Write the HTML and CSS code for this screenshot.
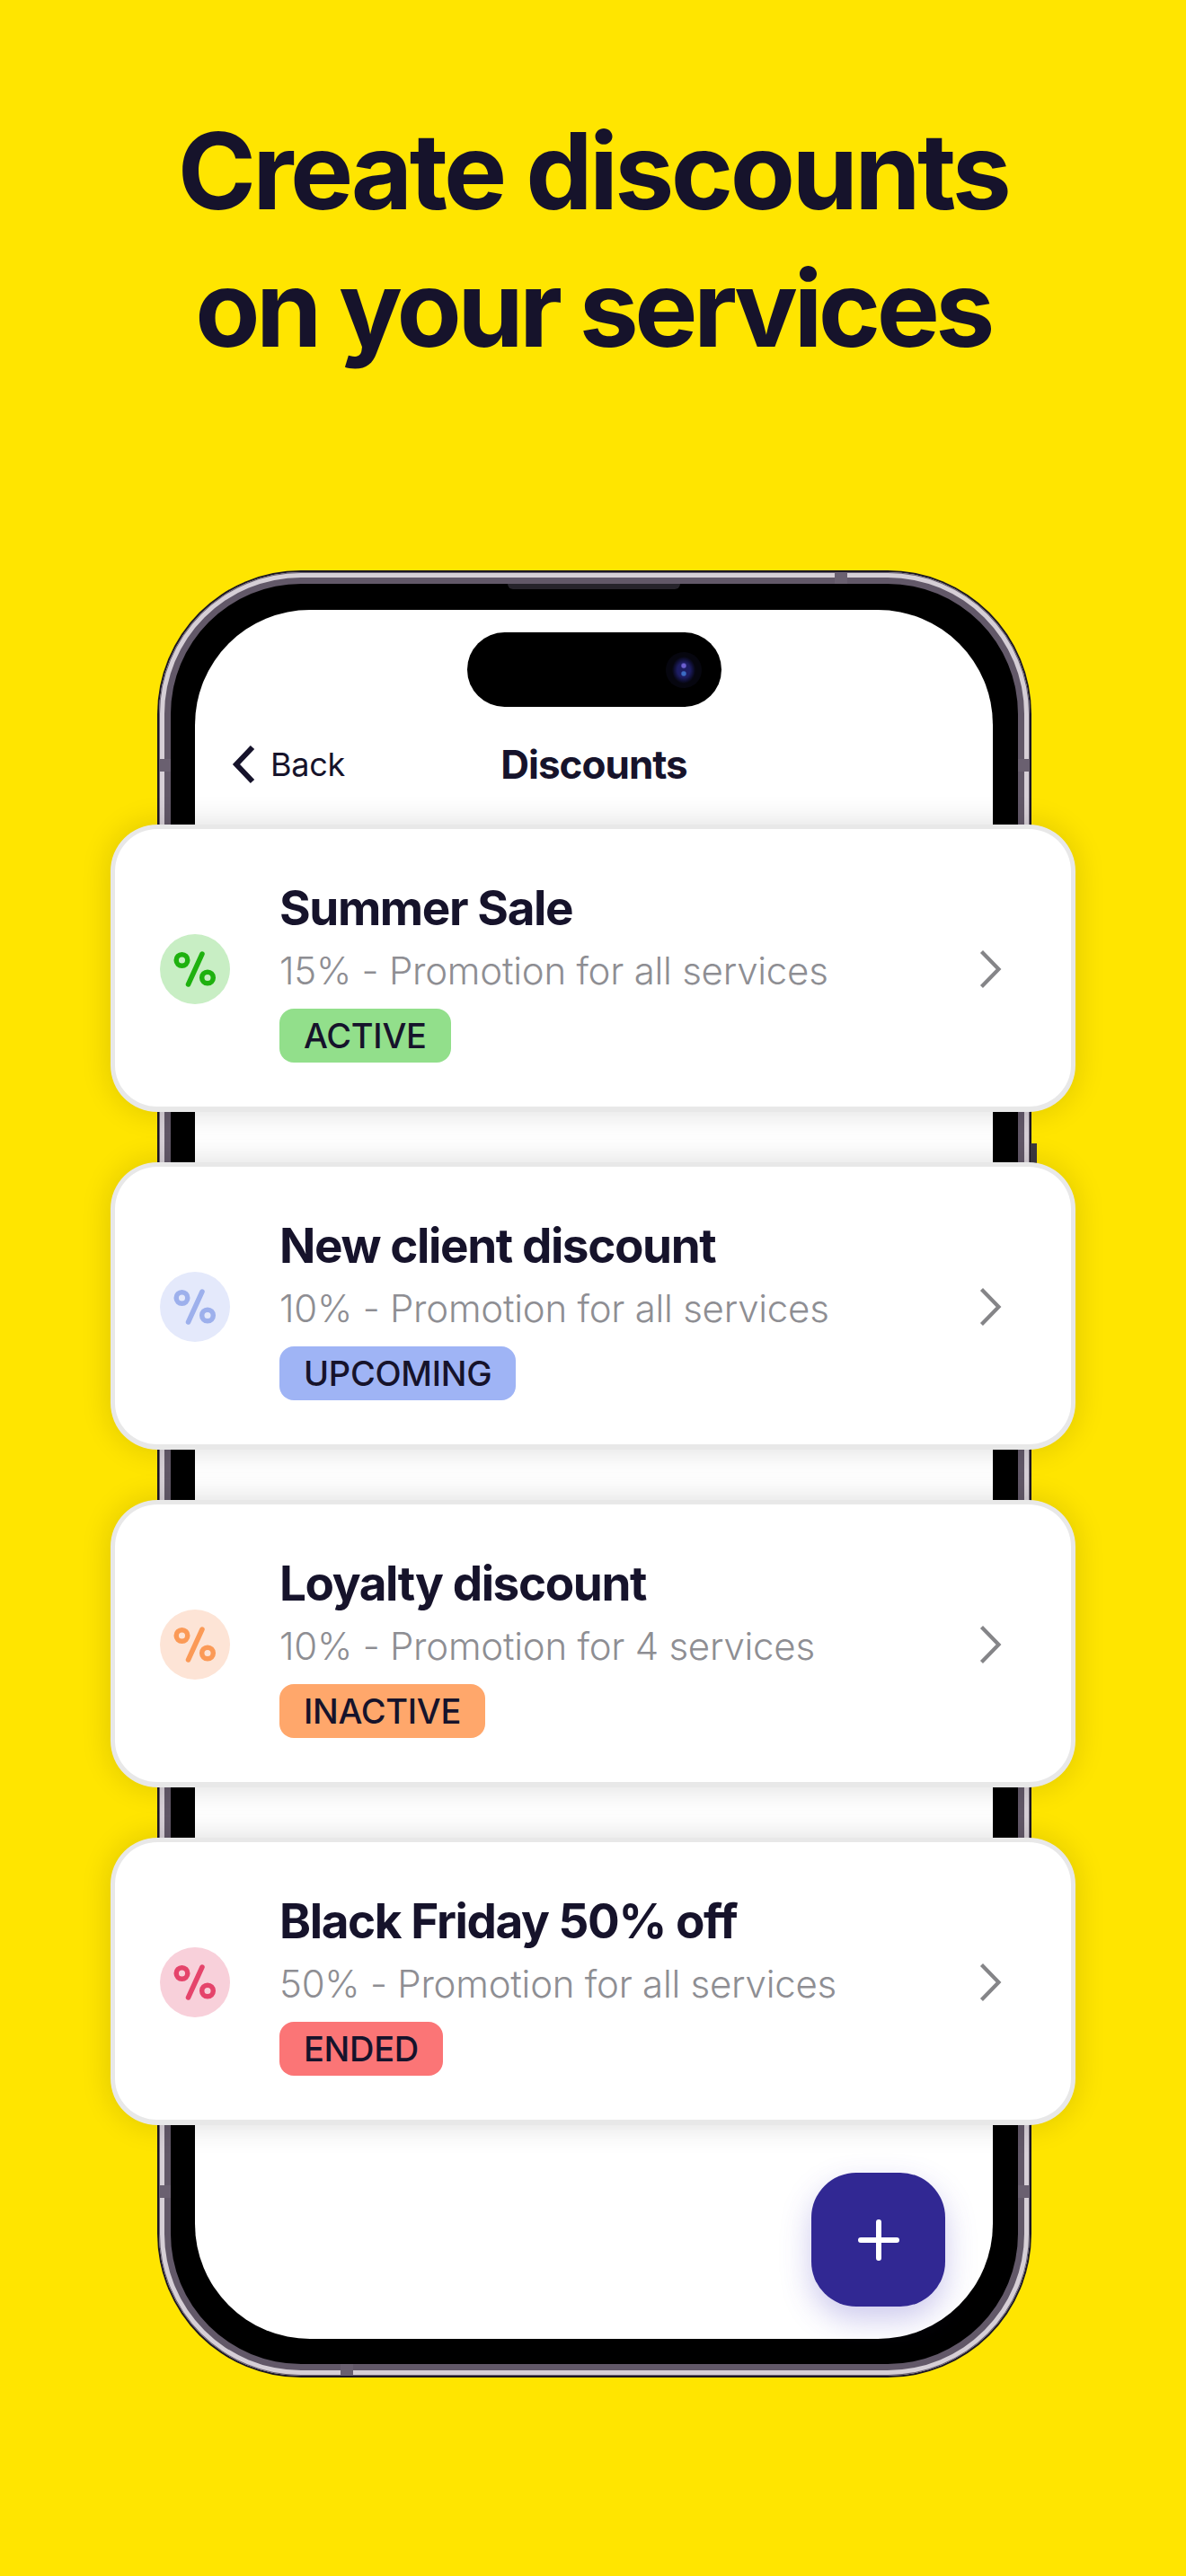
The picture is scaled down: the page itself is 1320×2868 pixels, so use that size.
FILE: index.html
```html
<!DOCTYPE html>
<html lang="en">
<head>
<meta charset="utf-8">
<title>Create discounts on your services</title>
<link rel="stylesheet" href="styles.css">
</head>
<body>
<main class="poster">
  <h1 class="headline">Create discounts<br><span class="line-two">on your services</span></h1>
  <div class="stage">
    <div class="phone">
      <span class="side-button"></span>
      <div class="bezel">
        <span class="notch notch-top"></span>
        <span class="notch notch-bottom"></span>
        <span class="notch notch-left-a"></span>
        <span class="notch notch-left-b"></span>
        <span class="notch notch-right-a"></span>
        <span class="notch notch-right-b"></span>
        <div class="speaker"></div>
        <div class="screen">
          <div class="island"><span class="camera"></span></div>
          <header class="nav">
            <div class="back">
              <svg class="back-icon" viewBox="0 0 28 44" aria-hidden="true"><path d="M24 3 6 22l18 19" fill="none" stroke="#16132b" stroke-width="6"/></svg>
              <span>Back</span>
            </div>
            <div class="nav-title">Discounts</div>
          </header>
          <div class="fab-row">
            <div class="fab">
              <svg class="plus" viewBox="0 0 46 46" aria-hidden="true"><path d="M23 3v40M3 23h40" fill="none" stroke="#fff" stroke-width="6" stroke-linecap="round"/></svg>
            </div>
          </div>
        </div>
      </div>
    </div>
    <div class="cards">
      <article class="card">
        <div class="pct pct-green"><svg viewBox="0 0 48 40" aria-hidden="true"><circle cx="9.5" cy="10" r="6.3"/><circle cx="38" cy="29.5" r="6.3"/><path d="M32 3 16.5 37"/></svg></div>
        <div class="body">
          <h2 class="title">Summer Sale</h2>
          <p class="sub">15% - Promotion for all services</p>
          <span class="badge badge-green">ACTIVE</span>
        </div>
        <svg class="chev" viewBox="0 0 26 46" aria-hidden="true"><path d="M3.5 3.5 22.5 23 3.5 42.5"/></svg>
      </article>
      <article class="card">
        <div class="pct pct-blue"><svg viewBox="0 0 48 40" aria-hidden="true"><circle cx="9.5" cy="10" r="6.3"/><circle cx="38" cy="29.5" r="6.3"/><path d="M32 3 16.5 37"/></svg></div>
        <div class="body">
          <h2 class="title">New client discount</h2>
          <p class="sub">10% - Promotion for all services</p>
          <span class="badge badge-blue">UPCOMING</span>
        </div>
        <svg class="chev" viewBox="0 0 26 46" aria-hidden="true"><path d="M3.5 3.5 22.5 23 3.5 42.5"/></svg>
      </article>
      <article class="card">
        <div class="pct pct-orange"><svg viewBox="0 0 48 40" aria-hidden="true"><circle cx="9.5" cy="10" r="6.3"/><circle cx="38" cy="29.5" r="6.3"/><path d="M32 3 16.5 37"/></svg></div>
        <div class="body">
          <h2 class="title">Loyalty discount</h2>
          <p class="sub">10% - Promotion for 4 services</p>
          <span class="badge badge-orange">INACTIVE</span>
        </div>
        <svg class="chev" viewBox="0 0 26 46" aria-hidden="true"><path d="M3.5 3.5 22.5 23 3.5 42.5"/></svg>
      </article>
      <article class="card">
        <div class="pct pct-red"><svg viewBox="0 0 48 40" aria-hidden="true"><circle cx="9.5" cy="10" r="6.3"/><circle cx="38" cy="29.5" r="6.3"/><path d="M32 3 16.5 37"/></svg></div>
        <div class="body">
          <h2 class="title">Black Friday 50% off</h2>
          <p class="sub">50% - Promotion for all services</p>
          <span class="badge badge-red">ENDED</span>
        </div>
        <svg class="chev" viewBox="0 0 26 46" aria-hidden="true"><path d="M3.5 3.5 22.5 23 3.5 42.5"/></svg>
      </article>
    </div>
  </div>
</main>
</body>
</html>
```
FILE: styles.css
```css
* { box-sizing: border-box; }
html, body { margin: 0; padding: 0; }
body { background: #ffe500; font-family: Inter, "Liberation Sans", sans-serif; color: #16132b; }
.poster { width: 1320px; height: 2868px; overflow: hidden; display: flex; flex-direction: column; }

.headline {
  margin: 114px 0 0;
  height: 521px;
  font-size: 118px;
  line-height: 153px;
  font-weight: 700;
  letter-spacing: -3.6px;
  text-align: center;
}
.line-two { letter-spacing: -4.6px; }

.stage { display: grid; justify-items: start; }
.phone, .cards { grid-area: 1 / 1; }

.phone {
  position: relative;
  margin-left: 175px;
  width: 973px;
  height: 2012px;
  padding: 2px;
  border-radius: 160px;
  background: #1b1622;
}
.side-button {
  position: absolute;
  right: -6px;
  top: 638px;
  width: 7px;
  height: 22px;
  background: #3c3840;
}
.bezel {
  position: relative;
  height: 100%;
  padding: 42px 41px 41px 40px;
  border-radius: 158px;
  background: #000;
  box-shadow: inset 0 0 0 1px #6b6270, inset 0 0 0 6px #d6cfd6, inset 0 0 0 13px #625868;
}
.notch { position: absolute; background: #6a6070; }
.notch-top { top: 0; left: 752px; width: 14px; height: 13px; }
.notch-bottom { bottom: 0; left: 202px; width: 14px; height: 13px; }
.notch-left-a { left: 0; top: 208px; width: 13px; height: 14px; }
.notch-left-b { left: 0; bottom: 198px; width: 13px; height: 14px; }
.notch-right-a { right: 0; top: 208px; width: 13px; height: 14px; }
.notch-right-b { right: 0; bottom: 198px; width: 13px; height: 14px; }
.speaker {
  position: absolute;
  top: 13px;
  left: 388px;
  width: 192px;
  height: 6px;
  border-radius: 0 0 6px 6px;
  background: #26232b;
}
.screen {
  height: 100%;
  border-radius: 128px;
  background: #fff;
  display: flex;
  flex-direction: column;
  align-items: stretch;
}
.island {
  align-self: center;
  margin-top: 25px;
  width: 283px;
  height: 83px;
  border-radius: 42px;
  background: #000;
  display: flex;
  justify-content: flex-end;
  align-items: center;
  padding-right: 22px;
}
.camera {
  width: 40px;
  height: 40px;
  border-radius: 50%;
  background:
    radial-gradient(circle at 50% 38%, #6c5fd0 0 2px, transparent 3.5px),
    radial-gradient(circle at 50% 60%, #3b6cc4 0 2px, transparent 3.5px),
    radial-gradient(ellipse 13px 15px at 50% 50%, #1d1d63 0 55%, #0d0d2c 85%, #06060f 100%);
}
.nav {
  margin-top: 29px;
  height: 70px;
  display: grid;
  align-items: center;
}
.back, .nav-title { grid-area: 1 / 1; }
.back { margin-left: 40px; display: flex; align-items: center; gap: 16px; font-size: 36px; font-weight: 400; letter-spacing: -0.3px; }
.back-icon { width: 28px; height: 44px; }
.nav-title { justify-self: center; font-size: 44px; font-weight: 700; letter-spacing: -1px; }
.fab-row { margin-top: auto; display: flex; justify-content: flex-end; padding: 0 53px 36px 0; }
.fab {
  width: 149px;
  height: 149px;
  border-radius: 50px;
  background: #312893;
  box-shadow: 0 14px 34px rgba(72, 62, 190, .28);
  display: flex;
  align-items: center;
  justify-content: center;
}
.plus { width: 46px; height: 46px; }

.cards {
  position: relative;
  margin: 283px 0 0 123px;
  width: 1074px;
  display: flex;
  flex-direction: column;
  gap: 56px;
}
.card {
  height: 320px;
  border: 5px solid #e8e8e8;
  border-bottom-width: 6px;
  border-radius: 52px;
  background: #fff;
  display: flex;
  align-items: center;
  padding: 2px 0 0 50px;
  box-shadow: 0 0 34px rgba(0, 0, 0, .14);
}
.pct {
  flex: none;
  width: 78px;
  height: 78px;
  border-radius: 50%;
  display: flex;
  align-items: center;
  justify-content: center;
}
.pct svg { width: 48px; height: 40px; fill: none; stroke-width: 5.5; stroke-linecap: round; }
.pct circle, .pct path { stroke: currentColor; }
.pct-green { background: #c8eec4; color: #1eb10f; }
.pct-blue { background: #e4e9fb; color: #9db0ec; }
.pct-orange { background: #fde4d6; color: #fb9a57; }
.pct-red { background: #f8d0da; color: #e5446b; }

.body { margin: 4px 0 0 55px; flex: 1; display: flex; flex-direction: column; align-items: flex-start; }
.title { margin: 0; font-size: 53px; line-height: 64px; font-weight: 700; letter-spacing: -1.4px; }
.sub { margin: 10px 0 0; font-size: 42px; line-height: 56px; font-weight: 300; color: #8e8e93; letter-spacing: -0.25px; }
.badge {
  margin-top: 14px;
  height: 60px;
  padding: 0 27px;
  border-radius: 16px;
  font-size: 38px;
  line-height: 60px;
  font-weight: 500;
  letter-spacing: -0.3px;
}
.badge-green { background: #92df8b; }
.badge-blue { background: #9fb4f5; }
.badge-orange { background: #ffa76b; }
.badge-red { background: #fb7576; }
.chev { flex: none; margin-right: 77px; width: 26px; height: 46px; fill: none; stroke: #858588; stroke-width: 4.2; }
```
